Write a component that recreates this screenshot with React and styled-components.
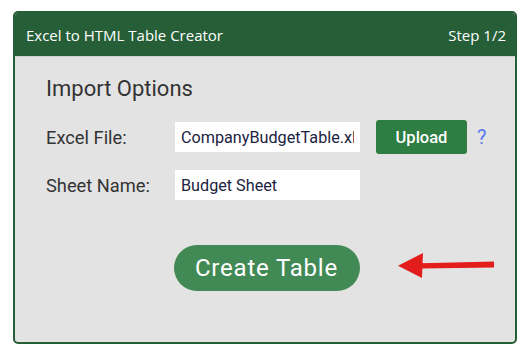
import React from "react";
import styled, { createGlobalStyle } from "styled-components";

const Global = createGlobalStyle`
  html, body { margin: 0; padding: 0; background: #ffffff; }
  body { font-family: Roboto, "Liberation Sans", sans-serif; }
  * { box-sizing: border-box; }
`;

const Page = styled.div`
  padding: 11px 12px 0 13px;
  width: 529px;
`;

const Card = styled.div`
  width: 504px;
  height: 333px;
  border: 2px solid #265e37;
  border-radius: 5px;
  background: #e3e3e3;
  overflow: hidden;
  display: flex;
  flex-direction: column;
`;

const Header = styled.div`
  height: 44px;
  flex: none;
  background: #265e37;
  border-bottom: 1px solid #cdd2ce;
  display: flex;
  align-items: center;
  justify-content: space-between;
  padding: 0 9px 0 11px;
  color: #ffffff;
  font-family: "Open Sans", "Noto Sans", sans-serif;
  font-size: 15px;
`;

const Body = styled.div`
  padding: 20px 31px 0 31px;
  display: flex;
  flex-direction: column;
`;

const Title = styled.h2`
  margin: 0;
  font-family: Roboto, sans-serif;
  font-weight: 400;
  font-size: 22px;
  line-height: 24px;
  color: #333333;
`;

const Form = styled.div`
  margin-top: 19px;
  display: grid;
  grid-template-columns: 129px 185px auto;
  row-gap: 16px;
  align-items: center;
`;

const Label = styled.label`
  font-size: 18.3px;
  color: #333333;
`;

const Input = styled.input`
  width: 185px;
  height: 30px;
  border: none;
  outline: none;
  background: #ffffff;
  padding: 0 6px;
  font-family: Roboto, sans-serif;
  font-size: 16.2px;
  color: #1c2340;
`;

const Actions = styled.div`
  display: flex;
  align-items: center;
  padding-left: 16px;
`;

const UploadButton = styled.button`
  width: 91px;
  height: 34px;
  border: none;
  border-radius: 3px;
  background: #2e7d42;
  color: #ffffff;
  font-family: Roboto, sans-serif;
  font-weight: 500;
  font-size: 16.5px;
  cursor: pointer;
`;

const Help = styled.span`
  margin-left: 10px;
  color: #5b7cf0;
  font-size: 20px;
`;

const CreateRow = styled.div`
  position: relative;
  margin: 45px -31px 0;
  display: flex;
  justify-content: center;
`;

const CreateButton = styled.button`
  width: 186px;
  height: 46px;
  margin-left: 3px;
  border: none;
  border-radius: 23px;
  background: #428a55;
  color: #ffffff;
  font-family: Roboto, sans-serif;
  font-size: 24px;
  letter-spacing: 0.8px;
  cursor: pointer;
`;

const Arrow = styled.svg`
  position: absolute;
  left: 383px;
  top: 8px;
`;

export default function App() {
  return (
    <>
      <Global />
      <Page>
        <Card>
          <Header>
            <span>Excel to HTML Table Creator</span>
            <span>Step 1/2</span>
          </Header>
          <Body>
            <Title>Import Options</Title>
            <Form>
              <Label>Excel File:</Label>
              <Input defaultValue="CompanyBudgetTable.xlsx" />
              <Actions>
                <UploadButton>Upload</UploadButton>
                <Help>?</Help>
              </Actions>
              <Label>Sheet Name:</Label>
              <Input defaultValue="Budget Sheet" />
              <span />
            </Form>
            <CreateRow>
              <CreateButton>Create Table</CreateButton>
              <Arrow width="97" height="26" viewBox="0 0 97 26">
                <polygon points="0,12.7 25,0 24,25" fill="#e31c1c" />
                <polygon points="23,10.2 96,8.6 96,14.4 23,15.6" fill="#e31c1c" />
              </Arrow>
            </CreateRow>
          </Body>
        </Card>
      </Page>
    </>
  );
}
